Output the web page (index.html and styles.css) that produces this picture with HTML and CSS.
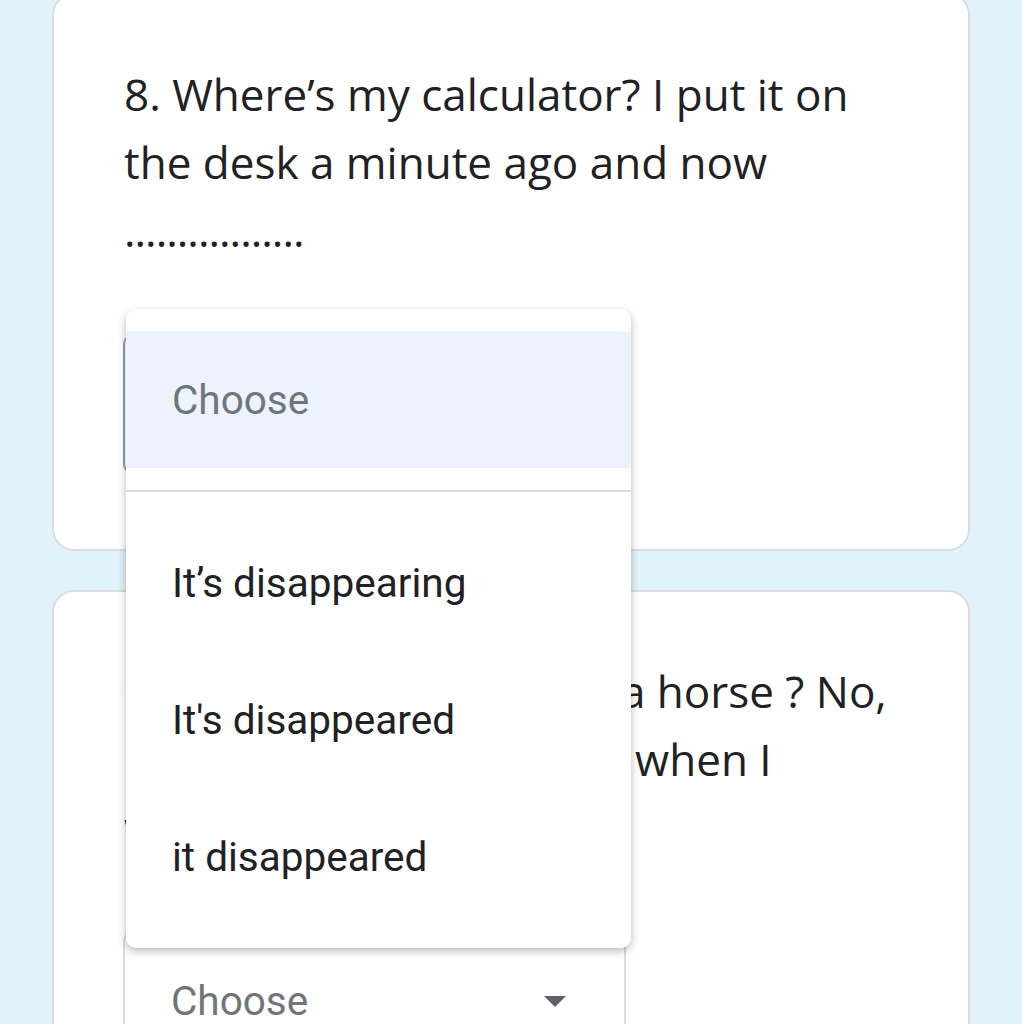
FILE: index.html
```html
<!DOCTYPE html>
<html lang="en">
<head>
    <meta charset="UTF-8">
    <meta name="viewport" content="width=device-width, initial-scale=1.0">
    <title>Quiz</title>
    <link rel="stylesheet" href="styles.css">
</head>
<body>

    <div class="page">
        <div class="card card-first">
            <div class="question-title">
                8. Where’s my calculator? I put it on<br>
                the desk a minute ago and now<br>
                <span class="blank">.................</span>
            </div>
            <div class="select">
                <span class="select-value">Choose</span>
                <span class="select-arrow"></span>

                <!-- открытое меню -->
                <div class="menu">
                    <div class="menu-item is-selected">Choose</div>
                    <div class="menu-divider"></div>
                    <div class="menu-item">It’s disappearing</div>
                    <div class="menu-item">It's disappeared</div>
                    <div class="menu-item">it disappeared</div>
                </div>
            </div>
        </div>

        <div class="card">
            <div class="question-title">
                9. Have you ever ridden a horse ? No,<br>
                but I rode a camel twice, when I<br>
                was on holiday in Egypt.
            </div>
            <div class="select">
                <span class="select-value">Choose</span>
                <span class="select-arrow"></span>
            </div>
        </div>
    </div>

</body>
</html>
```

FILE: styles.css
```css
body {
    font-family: "Open Sans", Arial, sans-serif;
    background-color: #e0f3fa;
    margin: 0;
    padding: 0;
    height: 1024px;
    overflow: hidden;
}

.page {
    padding: 0 52px;
}

.card {
    background-color: #fff;
    border: 2px solid #dadce0;
    border-radius: 22px;
    padding: 65px 70px 75px;
    margin-top: 39px;
}

.card-first {
    margin-top: -7px;
    position: relative;
    z-index: 2;
}

.question-title {
    font-size: 44px;
    line-height: 68px;
    color: #202124;
    white-space: nowrap;
}

.blank {
    letter-spacing: -1px;
}

.select {
    position: relative;
    margin-top: 70px;
    margin-left: -1px;
    width: 503px;
    height: 140px;
    box-sizing: border-box;
    border: 2px solid #dadce0;
    border-radius: 10px;
    display: flex;
    align-items: center;
    padding: 0 58px 0 46px;
    font-family: Roboto, Arial, sans-serif;
    font-size: 40.5px;
    color: #70757a;
}

.card-first .select {
    border-left-color: #9aa0a6;
}

.select-value {
    flex: 1;
}

.select-arrow {
    width: 0;
    height: 0;
    border-left: 11px solid transparent;
    border-right: 11px solid transparent;
    border-top: 11px solid #5f6368;
}

.menu {
    position: absolute;
    top: -27px;
    left: 1px;
    width: 505px;
    background-color: #fff;
    border-radius: 10px;
    box-shadow: 0 3px 8px rgba(0, 0, 0, 0.28);
    padding: 22px 0 23px;
    z-index: 5;
}

.menu-item {
    height: 137px;
    display: flex;
    align-items: center;
    padding-left: 46px;
    color: #202124;
}

    .menu-item.is-selected {
        background-color: #edf3fc;
        color: #70757a;
    }

.menu-divider {
    height: 2px;
    background-color: #dadce0;
    margin: 22px 0;
}
```
